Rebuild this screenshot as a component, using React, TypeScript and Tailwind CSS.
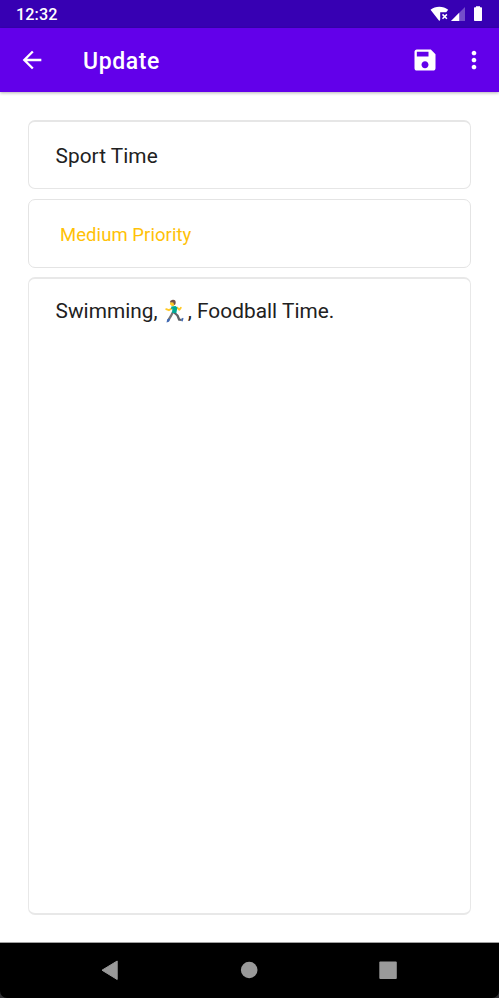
function Status() {
  return (
    <div className="flex h-7 shrink-0 bg-[#3700b3] pl-4">
      <span className="h-7 flex-1 text-[16.2px] leading-[29px] font-medium tracking-[0.1px]">12:32</span>
      <svg width="74" height="28" viewBox="0 0 74 28" fill="white" aria-hidden="true">
        <path d="M5.5 9.8C10.3 5.6 18.3 5.6 23.2 9.8L21.2 12.3H15.2V19.7L14.3 20.9Z" />
        <path d="m17.5 14.4 4.4 4.4m0-4.4-4.4 4.4" stroke="white" strokeWidth="1.5" />
        <path d="M40 7V21H26Z" opacity=".3" />
        <path d="M34.2 12.8V21H26Z" />
        <path d="M51 7.2V6.2h4v1h1.2q.8 0 .8.8v12.2q0 .8-.8.8h-6.4q-.8 0-.8-.8V8q0-.8.8-.8Z" />
      </svg>
    </div>
  );
}

function Runner() {
  return (
    <svg className="mr-[1.5px] ml-[6.5px] inline-block align-[-5px]" width="22" height="24" viewBox="0 0 22 24" aria-label="Running man">
      <path d="M9 13 6.8 17.2 4.8 20.3" fill="none" stroke="#757575" strokeWidth="2.3" />
      <path d="m9.5 13 4 3.5 1.7 4.2 2.4.1" fill="none" stroke="#5f6266" strokeWidth="2.3" strokeLinejoin="round" />
      <path d="m3.3 20 1.8-.5 1.1 1.2-1.3 2-2.4.7Z" fill="#4169b2" />
      <path d="m17.4 19.7 1.6-1 .5.7-.9 3.1-1.4-.4Z" fill="#4169b2" />
      <path d="M8 9.2 4.9 11.2 2.2 10.2M13.2 8.6l2.2 2.1 1.4-2" fill="none" stroke="#ffca28" strokeWidth="1.9" strokeLinecap="round" strokeLinejoin="round" />
      <path d="m7.4 7.6 4-.5 2 1.3-1.1 5.9-4.3-.5.4-4.2-1.4.7Z" fill="#00aa96" />
      <path d="M6 3.3h4.8v2.2L9.7 7H7.8L6.1 5.6Z" fill="#ffca28" />
      <path d="M5.8 3.3Q6.2.6 9.1.8q2.8.1 2.6 3.1-.1 1.8-1.6 2.2L9.3 3.6Z" fill="#735146" />
    </svg>
  );
}

export default function App() {
  return (
    <main className="flex h-[998px] w-full flex-col bg-white font-[Roboto,sans-serif] text-white">
      <Status />
      <header className="flex h-16 shrink-0 items-center bg-[#6200ea] pl-[17.5px] shadow-[0_1px_3px_rgba(0,0,0,0.3)]">
        <svg width="28" height="28" viewBox="0 0 24 24" fill="white" aria-label="Back">
          <path d="M20 11H7.83l5.59-5.59L12 4l-8 8 8 8 1.41-1.41L7.83 13H20v-2z" />
        </svg>
        <h1 className="ml-[37.5px] flex-1 pt-[3px] text-[23px] leading-8 font-medium tracking-[0.6px]">Update</h1>
        <svg className="mr-[21px]" width="28" height="28" viewBox="0 0 24 24" fill="white" aria-label="Save">
          <path d="M17 3H5c-1.11 0-2 .9-2 2v14c0 1.1.89 2 2 2h14c1.1 0 2-.9 2-2V7l-4-4zm-5 16c-1.66 0-3-1.34-3-3s1.34-3 3-3 3 1.34 3 3-1.34 3-3 3zm3-10H5V5h10v4z" />
        </svg>
        <svg className="mr-[11.5px]" width="28" height="28" viewBox="0 0 24 24" fill="white" aria-label="More options">
          <path d="M12 8c1.1 0 2-.9 2-2s-.9-2-2-2-2 .9-2 2 .9 2 2 2zm0 2c-1.1 0-2 .9-2 2s.9 2 2 2 2-.9 2-2-.9-2-2-2zm0 6c-1.1 0-2 .9-2 2s.9 2 2 2 2-.9 2-2-.9-2-2-2z" />
        </svg>
      </header>
      <section className="flex min-h-0 flex-1 flex-col px-7 pt-7 pb-[27px] text-[20.8px] text-[#212121]">
        <div className="flex h-[69px] shrink-0 items-center rounded-[7px] border border-t-2 border-[#e6e6e6] pt-[4px] pl-[26.5px]">
          <span className="tracking-[0.05px]">Sport Time</span>
        </div>
        <div className="mt-[10px] flex h-[69px] shrink-0 items-center rounded-[7px] border border-[#e4e4e4] pt-[5px] pl-[31px] text-[18.5px] tracking-[0.06px] text-[#ffc107]">
          Medium Priority
        </div>
        <div className="mt-[9px] flex-1 rounded-[7px] border border-y-2 border-[#e8e8e8] pt-4 pl-[26.5px] leading-8 tracking-[0.04px] whitespace-nowrap">
          Swimming,<Runner />, Foodball Time.
        </div>
      </section>
      <nav className="flex h-14 shrink-0 bg-[#303033]">
        <div className="flex-1 rounded-b-[7px] border-t border-[#a0a0a0] bg-black">
          <svg width="499" height="55" viewBox="0 0 499 55" fill="#999" aria-label="System navigation">
            <path d="M117.2 18 102 27.2 117.2 36.5Z" stroke="#999" strokeWidth="1" strokeLinejoin="round" />
            <circle cx="249.2" cy="27" r="8.3" />
            <rect x="379.3" y="18.4" width="17.5" height="17.5" rx="1" />
          </svg>
        </div>
      </nav>
    </main>
  );
}
